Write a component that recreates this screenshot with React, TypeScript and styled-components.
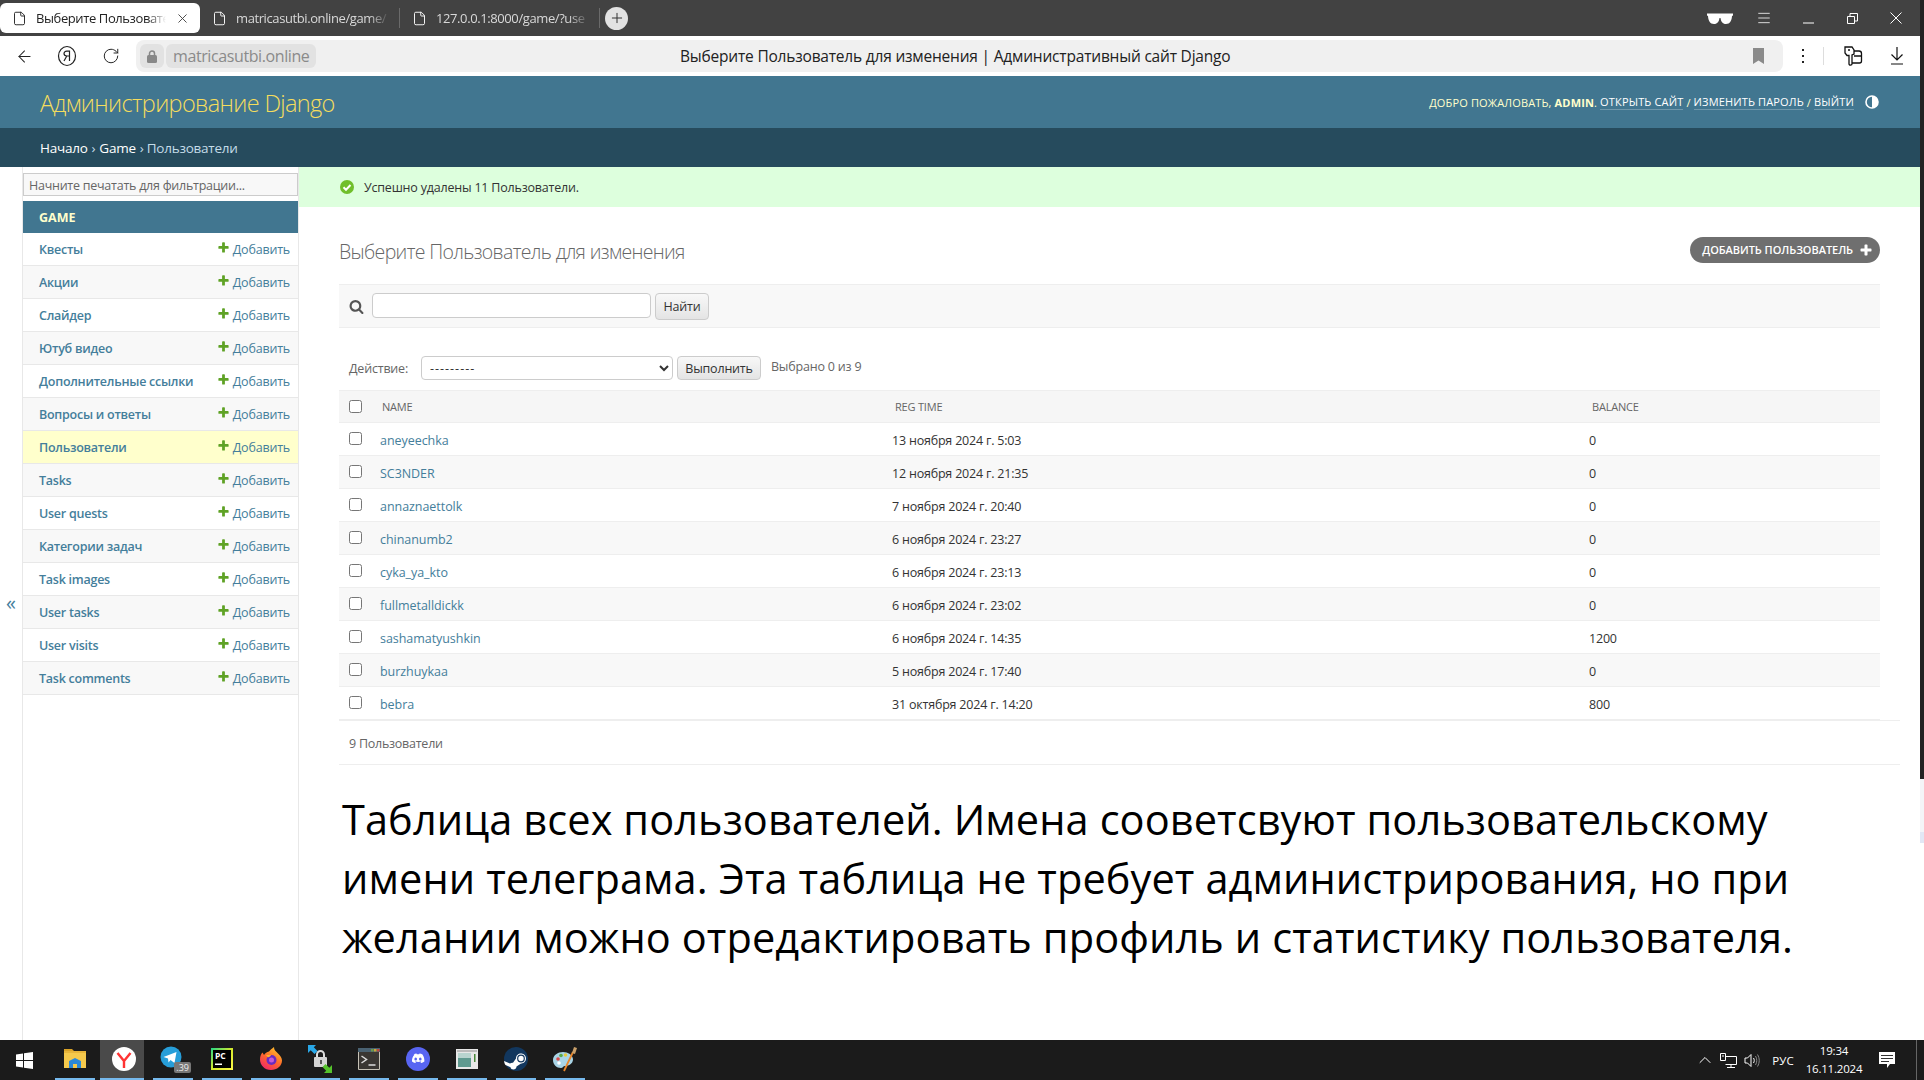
import React from "react"
import styled, { createGlobalStyle } from "styled-components"
import { ArrowLeft, ChevronUp, File, Menu, Plus, RotateCw, X } from "lucide-react"

const FONT = `"Open Sans", "Noto Sans", "Liberation Sans", sans-serif`

const GlobalStyle = createGlobalStyle`
  html, body {
    margin: 0;
    padding: 0;
    background: #fff;
    overflow: hidden;
  }
  body {
    font-family: ${FONT};
    color: #333;
  }
  * {
    box-sizing: border-box;
  }
`

const sidebarItems = [
  "Квесты",
  "Акции",
  "Слайдер",
  "Ютуб видео",
  "Дополнительные ссылки",
  "Вопросы и ответы",
  "Пользователи",
  "Tasks",
  "User quests",
  "Категории задач",
  "Task images",
  "User tasks",
  "User visits",
  "Task comments",
]

const users = [
  ["aneyeechka", "13 ноября 2024 г. 5:03", "0"],
  ["SC3NDER", "12 ноября 2024 г. 21:35", "0"],
  ["annaznaettolk", "7 ноября 2024 г. 20:40", "0"],
  ["chinanumb2", "6 ноября 2024 г. 23:27", "0"],
  ["cyka_ya_kto", "6 ноября 2024 г. 23:13", "0"],
  ["fullmetalldickk", "6 ноября 2024 г. 23:02", "0"],
  ["sashamatyushkin", "6 ноября 2024 г. 14:35", "1200"],
  ["burzhuykaa", "5 ноября 2024 г. 17:40", "0"],
  ["bebra", "31 октября 2024 г. 14:20", "800"],
]

const PlusIcon = () => (
  <AddGlyph viewBox="0 0 1792 1792">
    <path
      fill="currentColor"
      d="M1600 796v192q0 40-28 68t-68 28h-416v416q0 40-28 68t-68 28h-192q-40 0-68-28t-28-68v-416h-416q-40 0-68-28t-28-68v-192q0-40 28-68t68-28h416v-416q0-40 28-68t68-28h192q40 0 68 28t28 68v416h416q40 0 68 28t28 68z"
    />
  </AddGlyph>
)

const SearchIcon = () => (
  <svg width="15" height="15" viewBox="0 0 1792 1792">
    <path
      fill="#555"
      d="M1216 832q0-185-131.500-316.500t-316.500-131.500-316.500 131.500-131.500 316.500 131.500 316.500 316.500 131.500 316.500-131.500 131.500-316.500zm512 832q0 52-38 90t-90 38q-54 0-90-38l-343-342q-179 124-399 124-143 0-273.500-55.500t-225-150-150-225-55.500-273.500 55.500-273.500 150-225 225-150 273.500-55.500 273.500 55.500 225 150 150 225 55.500 273.500q0 220-124 399l343 343q37 37 37 90z"
    />
  </svg>
)

const Glasses = () => (
  <svg width="26" height="14" viewBox="0 0 26 14">
    <path fill="#fff" d="M0 2.500h26v2l-1 .5c-.3 4.500-2 8-6 8-3.500 0-5-2.500-5.500-6h-1C12 10.500 10.500 13 7 13 3 13 1.300 9.500 1 5l-1-.5z" />
  </svg>
)

const Restore = () => (
  <svg width="11" height="11" viewBox="0 0 11 11" fill="none" stroke="#fff">
    <path d="M.5 3.500h7v7h-7zM3 3.500V.5h7.500V8H7.500" />
  </svg>
)

const Minimize = () => (
  <svg width="11" height="11" viewBox="0 0 11 11">
    <path stroke="#fff" d="M0 10h11" />
  </svg>
)

const CloseThin = () => (
  <svg width="12" height="12" viewBox="0 0 12 12">
    <path stroke="#fff" d="M.5.500l11 11M11.500.500l-11 11" />
  </svg>
)

const YandexBadge = () => (
  <svg width="20" height="22" viewBox="0 0 20 22" fill="none" stroke="#222" strokeWidth="1.200">
    <ellipse cx="10" cy="11" rx="8.500" ry="9.500" />
    <path d="M12.500 16V6.200H9.800C8 6.200 7 7.300 7 8.600s1 2.400 2.800 2.400h2.700M9.800 11L7 16" />
  </svg>
)

const LockIcon = () => (
  <svg width="10" height="13" viewBox="0 0 10 13">
    <path fill="none" stroke="#888" strokeWidth="1.500" d="M2.500 6V3.500a2.500 2.500 0 015 0V6" />
    <rect x="0" y="5" width="10" height="8" rx="1.500" fill="#888" />
  </svg>
)

const BookmarkIcon = () => (
  <svg width="11" height="16" viewBox="0 0 11 16">
    <path fill="#8a8a8a" d="M0 0h11v16l-5.500-3.500L0 16z" />
  </svg>
)

const Dots = () => (
  <svg width="4" height="16" viewBox="0 0 4 16">
    <g fill="#222">
      <rect x="1" y="1" width="2" height="2" />
      <rect x="1" y="7" width="2" height="2" />
      <rect x="1" y="13" width="2" height="2" />
    </g>
  </svg>
)

const CollectionsIcon = () => (
  <svg width="20" height="21" viewBox="0 0 20 21" fill="none" stroke="#111" strokeWidth="1.300">
    <path d="M2 1h7l2 3v4l-2 1v9c0 1.500-3 1.500-3 0V9.500H4L2 7z" />
    <path d="M11 5h5c1.500 0 2.500 1 2.500 2.500V15c0 1-1 2-2 2H9M11 10h7.500" />
    <path d="M5 4h2" />
  </svg>
)

const DownloadIcon = () => (
  <svg width="14" height="18" viewBox="0 0 14 18" fill="none" stroke="#111" strokeWidth="1.200">
    <path d="M7 0v13M1.500 7.500L7 13l5.500-5.500M1 17h12" />
  </svg>
)

const ThemeIcon = () => (
  <svg width="14" height="14" viewBox="0 0 14 14">
    <circle cx="7" cy="7" r="6" fill="none" stroke="#fff" strokeWidth="1.600" />
    <path fill="#fff" d="M7 1a6 6 0 010 12z" />
  </svg>
)

const SuccessIcon = () => (
  <svg width="14" height="14" viewBox="0 0 14 14">
    <circle cx="7" cy="7" r="7" fill="#70bf2b" />
    <path d="M3.500 7.200l2.500 2.500 4.500-4.700" fill="none" stroke="#fff" strokeWidth="2" />
  </svg>
)

const WindowsLogo = () => (
  <svg width="17" height="17" viewBox="0 0 17 17">
    <path fill="#fff" d="M0 2.400L7 1.400V8H0zM8 1.300L17 0v8H8zM0 9h7v6.600l-7-1zM8 9h9v8l-9-1.300z" />
  </svg>
)

const ExplorerIcon = () => (
  <svg width="22" height="20" viewBox="0 0 22 20">
    <path fill="#d9a227" d="M0 0h8l2 2h-10z" />
    <rect x="0" y="2" width="22" height="17" fill="#f5c94c" />
    <rect x="0" y="2" width="22" height="2" fill="#e8b53a" />
    <path fill="#2b88d8" d="M5 19v-7l6-3 6 3v7h-4v-4H9v4z" />
  </svg>
)

const YandexIcon = () => (
  <svg width="24" height="24" viewBox="0 0 24 24">
    <circle cx="12" cy="12" r="12" fill="#fff" />
    <path d="M5.500 6L12 14v7M18.500 6L12 14" fill="none" stroke="#f33" strokeWidth="2.400" />
  </svg>
)

const TelegramIcon = () => (
  <svg width="26" height="26" viewBox="0 0 26 26">
    <circle cx="11" cy="11" r="10.500" fill="#279ed9" />
    <path fill="#fff" d="M3.500 11l13-5-2 11-4-3-2 2.500-.5-4z" />
  </svg>
)

const PyCharmIcon = () => (
  <svg width="22" height="22" viewBox="0 0 22 22">
    <defs>
      <linearGradient id="pc" x1="0" y1="0" x2="1" y2="1">
        <stop offset="0" stopColor="#21d789" />
        <stop offset="0.5" stopColor="#d6e92b" />
        <stop offset="1" stopColor="#fcf84a" />
      </linearGradient>
    </defs>
    <rect width="22" height="22" fill="url(#pc)" />
    <rect x="2" y="2" width="18" height="18" fill="#000" />
    <text x="4" y="11" fontSize="8.500" fontWeight="700" fill="#fff" fontFamily={FONT}>
      PC
    </text>
    <rect x="4" y="15.500" width="7" height="1.500" fill="#fff" />
  </svg>
)

const FirefoxIcon = () => (
  <svg width="24" height="24" viewBox="0 0 24 24">
    <defs>
      <linearGradient id="ff" x1="0.800" y1="0" x2="0.200" y2="1">
        <stop offset="0" stopColor="#ffc82c" />
        <stop offset="0.500" stopColor="#ff6a2b" />
        <stop offset="1" stopColor="#f0246a" />
      </linearGradient>
    </defs>
    <path fill="url(#ff)" d="M12 23C5.500 23 1 18 1 12.500 1 9.500 2 7 3.500 5.500L5 8c1-2 3-3 5-3.500C11 3 13 1.500 15 0c0 3 1.500 4 4 6.500 2.500 2.500 4 4.500 4 7C23 19 18 23 12 23z" />
    <circle cx="12.500" cy="13" r="5" fill="#6a2bc0" />
    <circle cx="12.500" cy="13" r="2.500" fill="#c45ad6" />
    <path fill="#ffb02c" d="M7 8h5c-.5 1.500-2 2-3 2.500z" />
  </svg>
)

const KeyLockIcon = () => (
  <svg width="24" height="28" viewBox="0 0 24 28">
    <path fill="#29a8e8" d="M0 0h8L5.800 2.200 9.500 6l-3 3-3.800-3.700L0 8z" />
    <path fill="none" stroke="#ddd" strokeWidth="2" d="M9 13V9.500a3.500 3.500 0 017 0V13" />
    <rect x="6" y="12" width="13" height="10" rx="1" fill="#d4d4d4" />
    <rect x="12" y="15" width="2" height="4" fill="#555" />
    <path fill="#55c22c" d="M24 28h-8l2.200-2.200-3.700-3.800 3-3 3.800 3.700L24 20z" />
  </svg>
)

const TerminalIcon = () => (
  <svg width="22" height="22" viewBox="0 0 22 22">
    <rect width="22" height="22" rx="1" fill="#c6c2b6" />
    <rect width="22" height="4" fill="#4a6272" />
    <rect x="13" y="1" width="2.500" height="2.500" fill="#6c9a4a" />
    <rect x="16" y="1" width="2.500" height="2.500" fill="#c9a83a" />
    <rect x="19" y="1" width="2.500" height="2.500" fill="#c0453a" />
    <rect x="1" y="4" width="20" height="17" fill="#3a3733" />
    <path d="M3.500 8l5 3.500-5 3.500" fill="none" stroke="#ddd" strokeWidth="1.500" />
    <path d="M10.500 17h7" stroke="#ddd" strokeWidth="1.500" />
  </svg>
)

const DiscordIcon = () => (
  <svg width="24" height="24" viewBox="0 0 24 24">
    <circle cx="12" cy="12" r="12" fill="#5865f2" />
    <path fill="#fff" d="M7.500 7.500c1-.5 2-.8 3-.9l.3.600h2.400l.3-.6c1 .1 2 .4 3 .9 1.500 2.300 2 4.600 1.900 7-1 .8-2.200 1.300-3.300 1.500l-.7-1.100.9-.5-.3-.2c-2 .9-3.700.9-5.600 0l-.3.200.9.500-.7 1.100c-1.100-.2-2.300-.7-3.300-1.500-.1-2.400.4-4.700 2.500-7z" />
    <ellipse cx="9.700" cy="12" rx="1.300" ry="1.500" fill="#5865f2" />
    <ellipse cx="14.300" cy="12" rx="1.300" ry="1.500" fill="#5865f2" />
  </svg>
)

const AppWindowIcon = () => (
  <svg width="22" height="20" viewBox="0 0 22 20">
    <rect width="22" height="20" fill="#e8e8e8" />
    <rect x="1" y="1" width="20" height="2" fill="#bbb" />
    <rect x="2" y="4" width="13" height="14" fill="#5f9a90" />
    <rect x="2" y="4" width="13" height="5" fill="#b8d4cf" />
    <rect x="18" y="5" width="1.500" height="8" fill="#4a8a3a" />
  </svg>
)

const SteamIcon = () => (
  <svg width="24" height="24" viewBox="0 0 24 24">
    <circle cx="12" cy="12" r="12" fill="#12375e" />
    <path fill="#fff" d="M0 14l6 2.500c1-.8 2-1 3-.8l3-4.200c0-3 2.200-5 5-5s5 2.200 5 5-2.200 5-5 5l-4.500 3c0 2-1.500 3-3 3-1.700 0-2.700-1-3-2.300L1.500 18C.8 17 .2 15.500 0 14z" />
    <circle cx="17" cy="11.500" r="3.300" fill="none" stroke="#12375e" strokeWidth="1.200" />
  </svg>
)

const PaletteIcon = () => (
  <svg width="26" height="26" viewBox="0 0 26 26">
    <path fill="#a8d4e6" d="M1 14C1 9 6 6 11 6c5 0 10 3 10 7.500S16 20 13 20c-2 0-2 2-4 2-4.500 0-8-3.500-8-8z" />
    <circle cx="6" cy="13" r="1.800" fill="#d94a4a" />
    <circle cx="9" cy="9.500" r="1.800" fill="#5aa84a" />
    <circle cx="13.500" cy="9" r="1.800" fill="#e8c83a" />
    <circle cx="7" cy="17" r="1.800" fill="#fff" />
    <path d="M12 25L21 6" stroke="#e8862a" strokeWidth="1.800" />
    <path d="M20 7l2-6 3 1-2 6z" fill="#c9a06a" />
  </svg>
)

const ChatIcon = () => (
  <svg width="18" height="18" viewBox="0 0 18 18">
    <path fill="#fff" d="M1 1h16v12h-5l-3 4v-4H1z" />
    <path stroke="#333" d="M3 4.500h12M3 7.500h12M3 10.500h8" />
  </svg>
)

const NetworkIcon = () => (
  <svg width="17" height="15" viewBox="0 0 17 15" fill="none" stroke="#fff">
    <path d="M5.500 3.500h11v8h-11M11 11.500v3M7 14.500h8M.5.500h5v7h-5zM2 3h2" />
  </svg>
)

const SpeakerIcon = () => (
  <svg width="17" height="15" viewBox="0 0 17 15" fill="none" stroke="#fff">
    <path d="M1 5h2.500L7 1.500v12L3.500 10H1zM9.500 5c1 1.500 1 3.500 0 5" />
    <path stroke="#888" d="M11.500 3c1.700 3 1.700 6 0 9M13.500 1.500c2.300 4 2.300 8 0 12" />
  </svg>
)

const tasks = [
  { icon: <ExplorerIcon />, active: false },
  { icon: <YandexIcon />, active: true },
  { icon: <TelegramIcon />, badge: ".39", active: false },
  { icon: <PyCharmIcon />, active: false },
  { icon: <FirefoxIcon />, active: false },
  { icon: <KeyLockIcon />, active: false },
  { icon: <TerminalIcon />, active: false },
  { icon: <DiscordIcon />, active: false },
  { icon: <AppWindowIcon />, active: false },
  { icon: <SteamIcon />, active: false },
  { icon: <PaletteIcon />, active: false },
]

const App = () => {
  return (
    <>
      <GlobalStyle />
      <Screen>
        <Desktop>
          <BrowserWindow>
            <TabBar>
              <ActiveTab>
                <File size={15} color="#222" strokeWidth={1.5} />
                <TabTitle>Выберите Пользовате</TabTitle>
                <X size={15} color="#444" strokeWidth={1.5} />
              </ActiveTab>
              <Tab>
                <File size={15} color="#fff" strokeWidth={1.5} />
                <TabTitle $dark>matricasutbi.online/game/</TabTitle>
              </Tab>
              <TabSeparator />
              <Tab>
                <File size={15} color="#fff" strokeWidth={1.5} />
                <TabTitle $dark>127.0.0.1:8000/game/?use</TabTitle>
              </Tab>
              <TabSeparator />
              <NewTab>
                <Plus size={16} color="#333" strokeWidth={1.5} />
              </NewTab>
              <WindowControls>
                <WindowControl><Glasses /></WindowControl>
                <WindowControl><Menu size={16} color="#fff" strokeWidth={1.2} /></WindowControl>
                <WindowControl><Minimize /></WindowControl>
                <WindowControl><Restore /></WindowControl>
                <WindowControl><CloseThin /></WindowControl>
              </WindowControls>
            </TabBar>
            <AddressRow>
              <NavButton $width={48}><ArrowLeft size={19} color="#222" strokeWidth={1.3} /></NavButton>
              <NavButton $width={38}><YandexBadge /></NavButton>
              <NavButton $width={50}><RotateCw size={18} color="#222" strokeWidth={1.3} /></NavButton>
              <Omnibox>
                <LockChip><LockIcon /></LockChip>
                <DomainChip>matricasutbi.online</DomainChip>
                <PageTitle>Выберите Пользователь для изменения | Административный сайт Django</PageTitle>
                <BookmarkSlot><BookmarkIcon /></BookmarkSlot>
              </Omnibox>
              <NavButton $width={40}><Dots /></NavButton>
              <AddressSeparator />
              <NavButton $width={58}><CollectionsIcon /></NavButton>
              <NavButton $width={30}><DownloadIcon /></NavButton>
            </AddressRow>

            <Header>
              <Branding>Администрирование Django</Branding>
              <UserTools>
                ДОБРО ПОЖАЛОВАТЬ, <strong>ADMIN</strong>. <ToolLink>ОТКРЫТЬ САЙТ</ToolLink> /{" "}
                <ToolLink>ИЗМЕНИТЬ ПАРОЛЬ</ToolLink> / <ToolLink>ВЫЙТИ</ToolLink>
                <ThemeSlot><ThemeIcon /></ThemeSlot>
              </UserTools>
            </Header>
            <Breadcrumbs>
              <Crumb>Начало</Crumb> › <Crumb>Game</Crumb> › Пользователи
            </Breadcrumbs>

            <Body>
              <ToggleColumn>«</ToggleColumn>
              <Sidebar>
                <FilterWrap>
                  <FilterInput placeholder="Начните печатать для фильтрации..." />
                </FilterWrap>
                <AppCaption>GAME</AppCaption>
                {sidebarItems.map((item, i) => (
                  <SidebarRow key={item} $striped={i % 2 === 1} $current={item === "Пользователи"}>
                    <SidebarLink>{item}</SidebarLink>
                    <AddLink>
                      <PlusIcon />
                      Добавить
                    </AddLink>
                  </SidebarRow>
                ))}
              </Sidebar>

              <Main>
                <Message>
                  <SuccessIcon />
                  Успешно удалены 11 Пользователи.
                </Message>
                <Content>
                  <TitleRow>
                    <Title>Выберите Пользователь для изменения</Title>
                    <AddButton>
                      ДОБАВИТЬ ПОЛЬЗОВАТЕЛЬ
                      <PlusIcon />
                    </AddButton>
                  </TitleRow>
                  <Toolbar>
                    <SearchIcon />
                    <SearchInput readOnly />
                    <SearchButton $height={27} $width={54}>Найти</SearchButton>
                  </Toolbar>
                  <Actions>
                    <ActionLabel>Действие:</ActionLabel>
                    <ActionSelect defaultValue="">
                      <option value="">---------</option>
                    </ActionSelect>
                    <GreyButton $height={24} $width={84}>Выполнить</GreyButton>
                    <SelectedCount>Выбрано 0 из 9</SelectedCount>
                  </Actions>
                  <Table>
                    <colgroup>
                      <col width="41" />
                      <col width="512" />
                      <col width="697" />
                      <col />
                    </colgroup>
                    <thead>
                      <tr>
                        <HeadCell><input type="checkbox" /></HeadCell>
                        <HeadCell>NAME</HeadCell>
                        <HeadCell>REG TIME</HeadCell>
                        <HeadCell>BALANCE</HeadCell>
                      </tr>
                    </thead>
                    <tbody>
                      {users.map(([name, time, balance], i) => (
                        <Row key={name} $striped={i % 2 === 1}>
                          <Cell><input type="checkbox" /></Cell>
                          <NameCell>{name}</NameCell>
                          <Cell>{time}</Cell>
                          <Cell>{balance}</Cell>
                        </Row>
                      ))}
                    </tbody>
                  </Table>
                  <Paginator>9 Пользователи</Paginator>
                  <Note>
                    Таблица всех пользователей. Имена сооветсвуют пользовательскому
                    <br />
                    имени телеграма. Эта таблица не требует администрирования, но при
                    <br />
                    желании можно отредактировать профиль и статистику пользователя.
                  </Note>
                </Content>
              </Main>
            </Body>
          </BrowserWindow>
          <EdgeStrip>
            <EdgeDark />
            <EdgeFaint />
            <EdgeBlue />
          </EdgeStrip>
        </Desktop>

        <Taskbar>
          <StartButton><WindowsLogo /></StartButton>
          <TaskList>
            {tasks.map((t, i) => (
              <TaskButton key={i} $active={t.active}>
                {t.icon}
                {t.badge && <TaskBadge>{t.badge}</TaskBadge>}
              </TaskButton>
            ))}
          </TaskList>
          <Tray>
            <TrayItem $width={22}><ChevronUp size={20} color="#fff" strokeWidth={1.2} /></TrayItem>
            <TrayItem $width={24}><NetworkIcon /></TrayItem>
            <TrayItem $width={24}><SpeakerIcon /></TrayItem>
            <TrayItem $width={38}>РУС</TrayItem>
            <Clock>
              <span>19:34</span>
              <span>16.11.2024</span>
            </Clock>
            <ChatSlot><ChatIcon /></ChatSlot>
            <ShowDesktop />
          </Tray>
        </Taskbar>
      </Screen>
    </>
  )
}

export default App

const Screen = styled.div`
  display: flex;
  flex-direction: column;
  width: 1924px;
  height: 1080px;
  overflow: hidden;
`

const Desktop = styled.div`
  display: flex;
  height: 1040px;
`

const BrowserWindow = styled.div`
  display: flex;
  flex-direction: column;
  width: 1920px;
  background: #fff;
`

const EdgeStrip = styled.div`
  display: flex;
  flex-direction: column;
  width: 4px;
`

const EdgeDark = styled.div`
  height: 779px;
  background: #222;
`

const EdgeFaint = styled.div`
  height: 53px;
  background: #f4f5f8;
`

const EdgeBlue = styled.div`
  height: 11px;
  background: #e2e7f5;
`

const TabBar = styled.div`
  display: flex;
  align-items: center;
  height: 36px;
  background: #424242;
`

const ActiveTab = styled.div`
  display: flex;
  align-items: center;
  width: 200px;
  height: 30px;
  padding: 0 10px 0 12px;
  gap: 9px;
  background: #fff;
  border-radius: 6px;
`

const Tab = styled.div`
  display: flex;
  align-items: center;
  width: 199px;
  height: 30px;
  padding: 0 9px 0 12px;
  gap: 9px;
`

const TabTitle = styled.div<{ $dark?: boolean }>`
  flex: 1;
  min-width: 0;
  white-space: nowrap;
  font-size: 13px;
  letter-spacing: -0.4px;
  color: ${(p) => (p.$dark ? "#d8d8d8" : "#222")};
  mask-image: linear-gradient(to right, #000 86%, transparent);
`

const TabSeparator = styled.div`
  width: 1px;
  height: 20px;
  background: #6a6a6a;
`

const NewTab = styled.div`
  display: flex;
  align-items: center;
  justify-content: center;
  width: 23px;
  height: 23px;
  margin-left: 5px;
  border-radius: 50%;
  background: #e2e2e2;
`

const WindowControls = styled.div`
  display: flex;
  margin-left: auto;
  padding-right: 2px;
`

const WindowControl = styled.div`
  display: flex;
  align-items: center;
  justify-content: center;
  width: 44px;
  height: 36px;
`

const AddressRow = styled.div`
  display: flex;
  align-items: center;
  height: 40px;
  background: #fff;
`

const NavButton = styled.div<{ $width: number }>`
  display: flex;
  align-items: center;
  justify-content: center;
  width: ${(p) => p.$width}px;
  height: 32px;
`

const Omnibox = styled.div`
  position: relative;
  display: flex;
  align-items: center;
  width: 1647px;
  height: 32px;
  padding: 0 4px;
  gap: 2px;
  border-radius: 8px;
  background: #f0f0f0;
`

const LockChip = styled.div`
  display: flex;
  align-items: center;
  justify-content: center;
  width: 24px;
  height: 24px;
  border-radius: 6px;
  background: #e2e2e2;
`

const DomainChip = styled.div`
  display: flex;
  align-items: center;
  height: 24px;
  padding: 0 7px;
  border-radius: 6px;
  background: #e2e2e2;
  color: #8a8a8a;
  font-size: 16px;
  letter-spacing: -0.4px;
`

const PageTitle = styled.div`
  position: absolute;
  left: 544px;
  font-size: 15.5px;
  letter-spacing: -0.2px;
  color: #222;
  white-space: nowrap;
`

const BookmarkSlot = styled.div`
  display: flex;
  margin-left: auto;
  margin-right: 15px;
`

const AddressSeparator = styled.div`
  width: 1px;
  height: 18px;
  background: #ddd;
`

const Header = styled.header`
  display: flex;
  align-items: center;
  justify-content: space-between;
  height: 52px;
  padding: 0 41px 0 40px;
  background: #417690;
`

const Branding = styled.div`
  padding-top: 1px;
  font-size: 23.5px;
  font-weight: 300;
  letter-spacing: -0.65px;
  color: #f5dd5d;
`

const UserTools = styled.div`
  display: flex;
  align-items: center;
  font-size: 11px;
  letter-spacing: 0.15px;
  color: #ffc;
  white-space: pre;

  strong {
    font-weight: 700;
  }
`

const ToolLink = styled.span`
  color: #fff;
  border-bottom: 1px solid rgba(255, 255, 255, 0.25);
`

const ThemeSlot = styled.span`
  display: flex;
  margin-left: 11px;
`

const Breadcrumbs = styled.div`
  display: flex;
  align-items: center;
  gap: 4px;
  height: 39px;
  padding-left: 40px;
  background: #264b5d;
  color: #c4dce8;
  font-size: 13.5px;
  letter-spacing: -0.25px;
`

const Crumb = styled.span`
  color: #fff;
`

const Body = styled.div`
  display: flex;
  flex: 1;
  min-height: 0;
`

const ToggleColumn = styled.div`
  display: flex;
  align-items: center;
  justify-content: center;
  width: 22px;
  padding-bottom: 2px;
  color: #447e9b;
  font-size: 20px;
`

const Sidebar = styled.nav`
  width: 277px;
  padding-top: 6px;
  border-left: 1px solid #e8e8e8;
  border-right: 1px solid #e8e8e8;
`

const FilterWrap = styled.div`
  padding-bottom: 5px;
`

const FilterInput = styled.input`
  display: block;
  width: 100%;
  height: 23px;
  padding: 1px 5px 0;
  border: 1.500px solid #ccc;
  background: #f8f8f8;
  font-family: ${FONT};
  font-size: 12.5px;
  letter-spacing: -0.25px;

  &::placeholder {
    color: #666;
    opacity: 1;
  }
`

const AppCaption = styled.div`
  display: flex;
  align-items: center;
  height: 32px;
  padding-left: 16px;
  background: #417690;
  color: #ffc;
  font-size: 12.5px;
  font-weight: 700;
`

const SidebarRow = styled.div<{ $striped: boolean; $current: boolean }>`
  display: flex;
  align-items: center;
  justify-content: space-between;
  height: 33px;
  padding: 0 8px 0 16px;
  border-bottom: 1px solid #e8e8e8;
  background: ${(p) => (p.$current ? "#ffc" : p.$striped ? "#f8f8f8" : "#fff")};
`

const SidebarLink = styled.span`
  font-size: 12.5px;
  font-weight: 600;
  letter-spacing: -0.25px;
  color: #447e9b;
`

const AddGlyph = styled.svg`
  width: 13px;
  height: 13px;
  flex: none;
`

const AddLink = styled.span`
  display: flex;
  align-items: center;
  font-size: 12.5px;
  letter-spacing: -0.2px;
  color: #447e9b;

  ${AddGlyph} {
    margin: -3px 3px 0 0;
    color: #5fa225;
  }
`

const Main = styled.main`
  flex: 1;
  min-width: 0;
`

const Message = styled.div`
  display: flex;
  align-items: center;
  gap: 10px;
  height: 40px;
  padding-left: 41px;
  background: #dfd;
  font-size: 12.5px;
  letter-spacing: -0.2px;
  color: #333;
`

const Content = styled.div`
  padding: 0 20px 0 40px;
`

const TitleRow = styled.div`
  display: flex;
  align-items: flex-start;
  justify-content: space-between;
  height: 77px;
  padding: 30px 20px 0 0;
`

const Title = styled.h1`
  margin: 1px 0 0;
  font-size: 19.5px;
  font-weight: 300;
  letter-spacing: -0.65px;
  line-height: 27px;
  color: #666;
`

const AddButton = styled.a`
  display: flex;
  align-items: center;
  gap: 6px;
  height: 26px;
  padding: 0 7px 1px 12px;
  border-radius: 13px;
  background: #6f6f6f;
  color: #fff;
  font-size: 11px;
  font-weight: 600;
  letter-spacing: -0.05px;

  ${AddGlyph} {
    color: #fff;
    width: 14px;
    height: 14px;
  }
`

const Toolbar = styled.div`
  display: flex;
  align-items: center;
  height: 44px;
  margin-right: 20px;
  padding-left: 10px;
  background: #f8f8f8;
  border-top: 1px solid #eee;
  border-bottom: 1px solid #eee;
`

const SearchInput = styled.input`
  width: 279px;
  height: 25px;
  margin: -2px 4px 0 8px;
  border: 1px solid #ccc;
  border-radius: 4px;
  background: #fff;
`

const GreyButton = styled.button<{ $height: number; $width: number }>`
  width: ${(p) => p.$width}px;
  height: ${(p) => p.$height}px;
  padding: 0;
  border: 1px solid #ccc;
  border-radius: 4px;
  background: linear-gradient(#f8f8f8, #e4e4e4);
  color: #333;
  font-family: ${FONT};
  font-size: 12.5px;
  letter-spacing: -0.2px;
`

const SearchButton = styled(GreyButton)`
  margin-top: 1px;
`

const Actions = styled.div`
  display: flex;
  align-items: center;
  height: 62px;
  margin-right: 20px;
  padding: 18px 0 0 10px;
`

const ActionLabel = styled.span`
  width: 72px;
  font-size: 12.5px;
  letter-spacing: -0.2px;
  color: #666;
`

const ActionSelect = styled.select`
  width: 252px;
  height: 24px;
  margin-right: 4px;
  padding: 0 4px;
  border: 1px solid #ccc;
  border-radius: 4px;
  background: #fff;
  color: #333;
  font-family: ${FONT};
  font-size: 12.5px;
  letter-spacing: 1px;
`

const SelectedCount = styled.span`
  margin: -4px 0 0 10px;
  font-size: 12.5px;
  letter-spacing: -0.2px;
  color: #666;
`

const Table = styled.table`
  width: 1541px;
  table-layout: fixed;
  border-collapse: collapse;
  border-top: 1px solid #eee;

  input {
    display: block;
    margin: -4px 0 0 10px;
    width: 13px;
    height: 13px;
  }
`

const HeadCell = styled.th`
  height: 32px;
  padding: 0 0 0 3px;
  background: #f6f6f6;
  border-bottom: 1px solid #eee;
  color: #666;
  font-size: 11px;
  font-weight: 400;
  letter-spacing: -0.2px;
  text-align: left;

  &:first-child {
    padding: 3px 0 0;
  }

  &:nth-child(2) {
    padding-left: 2px;
  }
`

const Row = styled.tr<{ $striped: boolean }>`
  background: ${(p) => (p.$striped ? "#f8f8f8" : "#fff")};
`

const Cell = styled.td`
  height: 33px;
  padding: 3px 0 0;
  border-bottom: 1px solid #eee;
  color: #333;
  font-size: 12.5px;
  letter-spacing: -0.2px;
`

const NameCell = styled(Cell)`
  color: #447e9b;
  font-weight: 500;
  letter-spacing: -0.05px;
`

const Paginator = styled.div`
  display: flex;
  align-items: center;
  height: 45px;
  padding: 1px 0 0 10px;
  border-top: 1px solid #eee;
  border-bottom: 1px solid #eee;
  color: #666;
  font-size: 12.5px;
  letter-spacing: -0.25px;
`

const Note = styled.p`
  margin: 25px 0 0 3px;
  color: #000;
  font-size: 41.5px;
  line-height: 59px;
  letter-spacing: 0.1px;
  white-space: nowrap;
`

const Taskbar = styled.footer`
  display: flex;
  height: 40px;
  background: #1b1b1b;
`

const StartButton = styled.div`
  display: flex;
  align-items: center;
  justify-content: center;
  width: 48px;
  height: 40px;
`

const TaskList = styled.div`
  display: flex;
  align-items: stretch;
  gap: 5px;
  padding-left: 3px;
`

const TaskButton = styled.div<{ $active: boolean }>`
  position: relative;
  display: flex;
  align-items: center;
  justify-content: center;
  width: ${(p) => (p.$active ? "44px" : "40px")};
  height: 40px;
  margin-left: ${(p) => (p.$active ? "0" : "4px")};
  padding-left: ${(p) => (p.$active ? "4px" : "0")};
  background: ${(p) => (p.$active ? "#4a4a4a" : "transparent")};
  border-bottom: 2px solid #76b9ed;
`

const TaskBadge = styled.span`
  position: absolute;
  right: 2px;
  bottom: 5px;
  padding: 0 2px;
  border-radius: 2px;
  background: #777;
  color: #eee;
  font-size: 9px;
  line-height: 11px;
`

const Tray = styled.div`
  display: flex;
  align-items: center;
  margin-left: auto;
  color: #fff;
  font-size: 11.5px;
`

const TrayItem = styled.div<{ $width: number }>`
  display: flex;
  align-items: center;
  justify-content: center;
  width: ${(p) => p.$width}px;
  height: 40px;
`

const ChatSlot = styled(TrayItem).attrs({ $width: 50 })`
  padding-right: 8px;
`

const Clock = styled.div`
  display: flex;
  flex-direction: column;
  align-items: center;
  width: 64px;
  font-size: 11.5px;
  letter-spacing: -0.2px;
  line-height: 18px;
`

const ShowDesktop = styled.div`
  width: 8px;
  height: 40px;
  border-left: 1px solid #666;
`
